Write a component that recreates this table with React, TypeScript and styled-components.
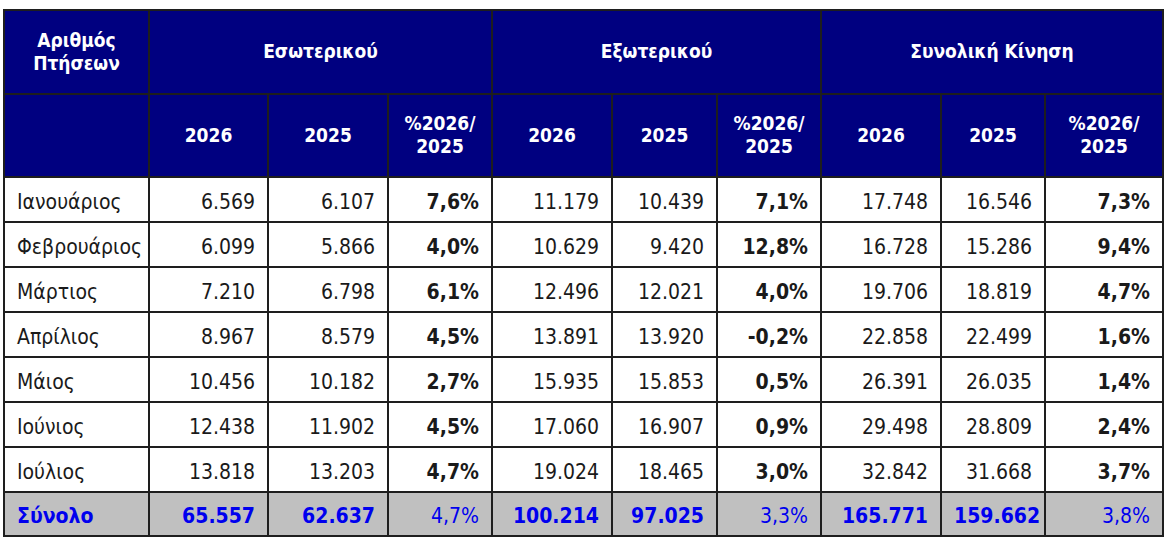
import { createGlobalStyle, styled } from "styled-components";

const NAVY = "#000080";
const LINE = "#1e1e1e";

const GlobalStyle = createGlobalStyle`
  body {
    margin: 0;
    background: #fff;
    font-family: "DejaVu Sans Condensed", "DejaVu Sans", sans-serif;
    font-stretch: condensed;
  }
`;

const Page = styled.div`
  padding: 9px 0 0 3px;
`;

const Table = styled.table`
  border-collapse: collapse;
  table-layout: fixed;
  width: 1160px;
  border: 2px solid ${LINE};
`;

const HeadCell = styled.th`
  background: ${NAVY};
  color: #fff;
  font-weight: bold;
  font-size: 19px;
  line-height: 23px;
  text-align: center;
  vertical-align: middle;
  height: 81.5px;
  padding: 0 6px;
  border: 2px solid ${LINE};
`;

const Cell = styled.td<{ $strong?: boolean }>`
  box-sizing: border-box;
  height: 45px;
  padding: 5px 12px 0;
  font-size: 21px;
  color: #1a1a1a;
  text-align: right;
  font-weight: ${(p) => (p.$strong ? "bold" : "normal")};
  border: 2px solid ${LINE};
  white-space: nowrap;
`;

const MonthCell = styled(Cell)`
  text-align: left;
`;

const TotalCell = styled.td<{ $strong?: boolean; $left?: boolean }>`
  box-sizing: border-box;
  height: 44px;
  padding: 4px 12px 0;
  background: #c0c0c0;
  color: #0000ee;
  font-size: 21px;
  font-weight: ${(p) => (p.$strong ? "bold" : "normal")};
  text-align: ${(p) => (p.$left ? "left" : "right")};
  border: 2px solid ${LINE};
  white-space: nowrap;
`;

const widths = [145, 119, 120, 104, 120, 105, 104, 120, 104, 118];

type Row = { month: string; values: string[] };

const rows: Row[] = [
  { month: "Ιανουάριος", values: ["6.569", "6.107", "7,6%", "11.179", "10.439", "7,1%", "17.748", "16.546", "7,3%"] },
  { month: "Φεβρουάριος", values: ["6.099", "5.866", "4,0%", "10.629", "9.420", "12,8%", "16.728", "15.286", "9,4%"] },
  { month: "Μάρτιος", values: ["7.210", "6.798", "6,1%", "12.496", "12.021", "4,0%", "19.706", "18.819", "4,7%"] },
  { month: "Απρίλιος", values: ["8.967", "8.579", "4,5%", "13.891", "13.920", "-0,2%", "22.858", "22.499", "1,6%"] },
  { month: "Μάιος", values: ["10.456", "10.182", "2,7%", "15.935", "15.853", "0,5%", "26.391", "26.035", "1,4%"] },
  { month: "Ιούνιος", values: ["12.438", "11.902", "4,5%", "17.060", "16.907", "0,9%", "29.498", "28.809", "2,4%"] },
  { month: "Ιούλιος", values: ["13.818", "13.203", "4,7%", "19.024", "18.465", "3,0%", "32.842", "31.668", "3,7%"] },
];

const totals = ["65.557", "62.637", "4,7%", "100.214", "97.025", "3,3%", "165.771", "159.662", "3,8%"];

const groups = ["Εσωτερικού", "Εξωτερικού", "Συνολική Κίνηση"];

// every third value column is the year-on-year percentage
const isPct = (i: number) => i % 3 === 2;

export default function App() {
  return (
    <Page>
      <GlobalStyle />
      <Table>
        <colgroup>
          {widths.map((w, i) => (
            <col key={i} style={{ width: w }} />
          ))}
        </colgroup>
        <thead>
          <tr>
            <HeadCell>
              Αριθμός
              <br />
              Πτήσεων
            </HeadCell>
            {groups.map((g) => (
              <HeadCell key={g} colSpan={3}>
                {g}
              </HeadCell>
            ))}
          </tr>
          <tr>
            <HeadCell />
            {groups.map((g) => [
              <HeadCell key={g + "a"}>2026</HeadCell>,
              <HeadCell key={g + "b"}>2025</HeadCell>,
              <HeadCell key={g + "c"}>
                %2026/
                <br />
                2025
              </HeadCell>,
            ])}
          </tr>
        </thead>
        <tbody>
          {rows.map((r) => (
            <tr key={r.month}>
              <MonthCell>{r.month}</MonthCell>
              {r.values.map((v, i) => (
                <Cell key={i} $strong={isPct(i)}>
                  {v}
                </Cell>
              ))}
            </tr>
          ))}
          <tr>
            <TotalCell $strong $left>
              Σύνολο
            </TotalCell>
            {totals.map((v, i) => (
              <TotalCell key={i} $strong={!isPct(i)}>
                {v}
              </TotalCell>
            ))}
          </tr>
        </tbody>
      </Table>
    </Page>
  );
}
